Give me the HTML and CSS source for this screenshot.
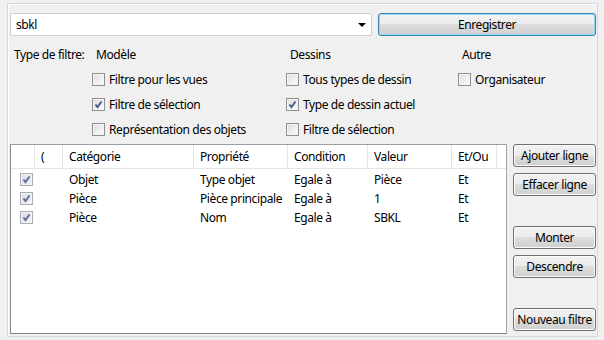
FILE: index.html
```html
<!DOCTYPE html>
<html lang="fr">
<head>
  <meta charset="UTF-8" />
  <title>Filtre</title>
  <link rel="stylesheet" href="styles.css">
</head>
<body>

  <div class="panel">
    <div class="toprow">
      <div class="combo">
        <span>sbkl</span>
        <span class="arrow"></span>
      </div>
      <button class="btn default save">Enregistrer</button>
    </div>

    <div class="filters">
      <div class="label">Type de filtre:</div>
      <div class="ghead">Modèle</div>
      <div class="ghead">Dessins</div>
      <div class="ghead">Autre</div>

      <div></div>
      <div class="opt"><span class="cb"></span>Filtre pour les vues</div>
      <div class="opt"><span class="cb"></span>Tous types de dessin</div>
      <div class="opt"><span class="cb"></span>Organisateur</div>

      <div></div>
      <div class="opt"><span class="cb on"><svg viewBox="0 0 11 11"><path d="M2.5 5.5 L4.5 8 L8.5 2.5" /></svg></span>Filtre de sélection</div>
      <div class="opt"><span class="cb on"><svg viewBox="0 0 11 11"><path d="M2.5 5.5 L4.5 8 L8.5 2.5" /></svg></span>Type de dessin actuel</div>
      <div></div>

      <div></div>
      <div class="opt"><span class="cb"></span>Représentation des objets</div>
      <div class="opt"><span class="cb"></span>Filtre de sélection</div>
      <div></div>
    </div>

    <div class="bottom">
      <div class="list">
        <div class="row head">
          <div></div>
          <div>(</div>
          <div>Catégorie</div>
          <div>Propriété</div>
          <div>Condition</div>
          <div>Valeur</div>
          <div>Et/Ou</div>
          <div class="last"></div>
        </div>
        <div class="row">
          <div><span class="cb on dim"><svg viewBox="0 0 11 11"><path d="M2.5 5.5 L4.5 8 L8.5 2.5" /></svg></span></div>
          <div></div>
          <div>Objet</div>
          <div>Type objet</div>
          <div>Egale à</div>
          <div>Pièce</div>
          <div>Et</div>
          <div></div>
        </div>
        <div class="row">
          <div><span class="cb on dim"><svg viewBox="0 0 11 11"><path d="M2.5 5.5 L4.5 8 L8.5 2.5" /></svg></span></div>
          <div></div>
          <div>Pièce</div>
          <div>Pièce principale</div>
          <div>Egale à</div>
          <div>1</div>
          <div>Et</div>
          <div></div>
        </div>
        <div class="row">
          <div><span class="cb on dim"><svg viewBox="0 0 11 11"><path d="M2.5 5.5 L4.5 8 L8.5 2.5" /></svg></span></div>
          <div></div>
          <div>Pièce</div>
          <div>Nom</div>
          <div>Egale à</div>
          <div>SBKL</div>
          <div>Et</div>
          <div></div>
        </div>
      </div>

      <div class="side">
        <button class="btn">Ajouter ligne</button>
        <button class="btn">Effacer ligne</button>
        <button class="btn spaced">Monter</button>
        <button class="btn">Descendre</button>
        <button class="btn spaced">Nouveau filtre</button>
      </div>
    </div>
  </div>

</body>
</html>
```

FILE: styles.css
```css
* {
  box-sizing: border-box;
}

body {
  margin: 0;
  width: 604px;
  height: 340px;
  background-color: #f0f0f0;
  font-family: "Noto Sans", "Open Sans", sans-serif;
  font-size: 12px;
  letter-spacing: -0.4px;
  color: #000;
  overflow: hidden;
}

.panel {
  margin: 3px 0 0 7px;
  width: 591px;
  height: 334px;
  border: 1px solid #d5d9dd;
  box-shadow: inset 1px 1px 0 #fff;
  padding: 9px 1px 0 2px;
}

.toprow {
  display: flex;
  gap: 6px;
  height: 23px;
}

.combo {
  width: 362px;
  height: 23px;
  background: #fff;
  border: 1px solid #d0d0d0;
  border-radius: 2px;
  display: flex;
  align-items: center;
  justify-content: space-between;
  padding: 0 5px 0 5px;
}

.combo .arrow {
  width: 0;
  height: 0;
  border-left: 4px solid transparent;
  border-right: 4px solid transparent;
  border-top: 4px solid #000;
  margin-top: 1px;
}

.btn {
  font: inherit;
  letter-spacing: inherit;
  color: #000;
  height: 23px;
  padding: 0;
  border: 1px solid #707070;
  border-radius: 3px;
  background: linear-gradient(#f2f2f2 0%, #ebebeb 50%, #dddddd 50%, #cfcfcf 100%);
  box-shadow: inset 0 0 0 1px #fcfcfc;
}

.btn.default {
  border-color: #3c7fb1;
  box-shadow: inset 0 0 0 1px #8fdcf8;
}

.save {
  width: 218px;
}

.filters {
  margin-top: 7px;
  display: grid;
  grid-template-columns: 82px 194px 172px 1fr;
  grid-template-rows: 23px repeat(3, 25px);
  align-items: center;
}

.label {
  padding-left: 4px;
}

.ghead {
  padding-left: 4px;
}

.opt {
  display: flex;
  align-items: center;
  gap: 4px;
  padding-top: 1px;
}

.cb {
  width: 13px;
  height: 13px;
  border: 1px solid #8e8f8f;
  background: linear-gradient(135deg, #dcdcdc, #fdfdfd);
  box-shadow: inset 0 0 0 1px #f4f4f4;
  display: inline-flex;
  align-items: center;
  justify-content: center;
  flex: none;
}

.cb svg {
  width: 11px;
  height: 11px;
}

.cb path {
  fill: none;
  stroke: #4a5c94;
  stroke-width: 2;
}

.cb.dim {
  border-color: #a9acb2;
  background: linear-gradient(135deg, #d8dce4, #f3f4f7);
}

.cb.dim path {
  stroke: #5e6f9e;
}

.bottom {
  margin-top: 3px;
  display: flex;
  gap: 6px;
}

.list {
  width: 498px;
  height: 190px;
  background: #fff;
  border: 1px solid #828790;
  border-top-color: #9a9ea6;
  border-right-color: #a0a4ab;
}

.row {
  display: grid;
  grid-template-columns: 24px 28px 131px 94px 80px 84px 45px 1fr;
  height: 19px;
  align-items: center;
}

.row > div {
  padding-left: 6px;
  padding-top: 2px;
  white-space: nowrap;
  height: 100%;
  display: flex;
  align-items: center;
}

.row > div:first-child {
  padding-left: 9px;
}

.row.head {
  height: 24px;
  border-bottom: 1px solid #e5e5e5;
  background: #fff;
}

.row.head > div {
  border-right: 1px solid #e5e5e5;
  padding-top: 0;
  padding-bottom: 1px;
}

.row.head > div.last {
  border-right: none;
}

.side {
  width: 83px;
  display: flex;
  flex-direction: column;
  gap: 6px;
}

.side .spaced {
  margin-top: 24px;
}
```
